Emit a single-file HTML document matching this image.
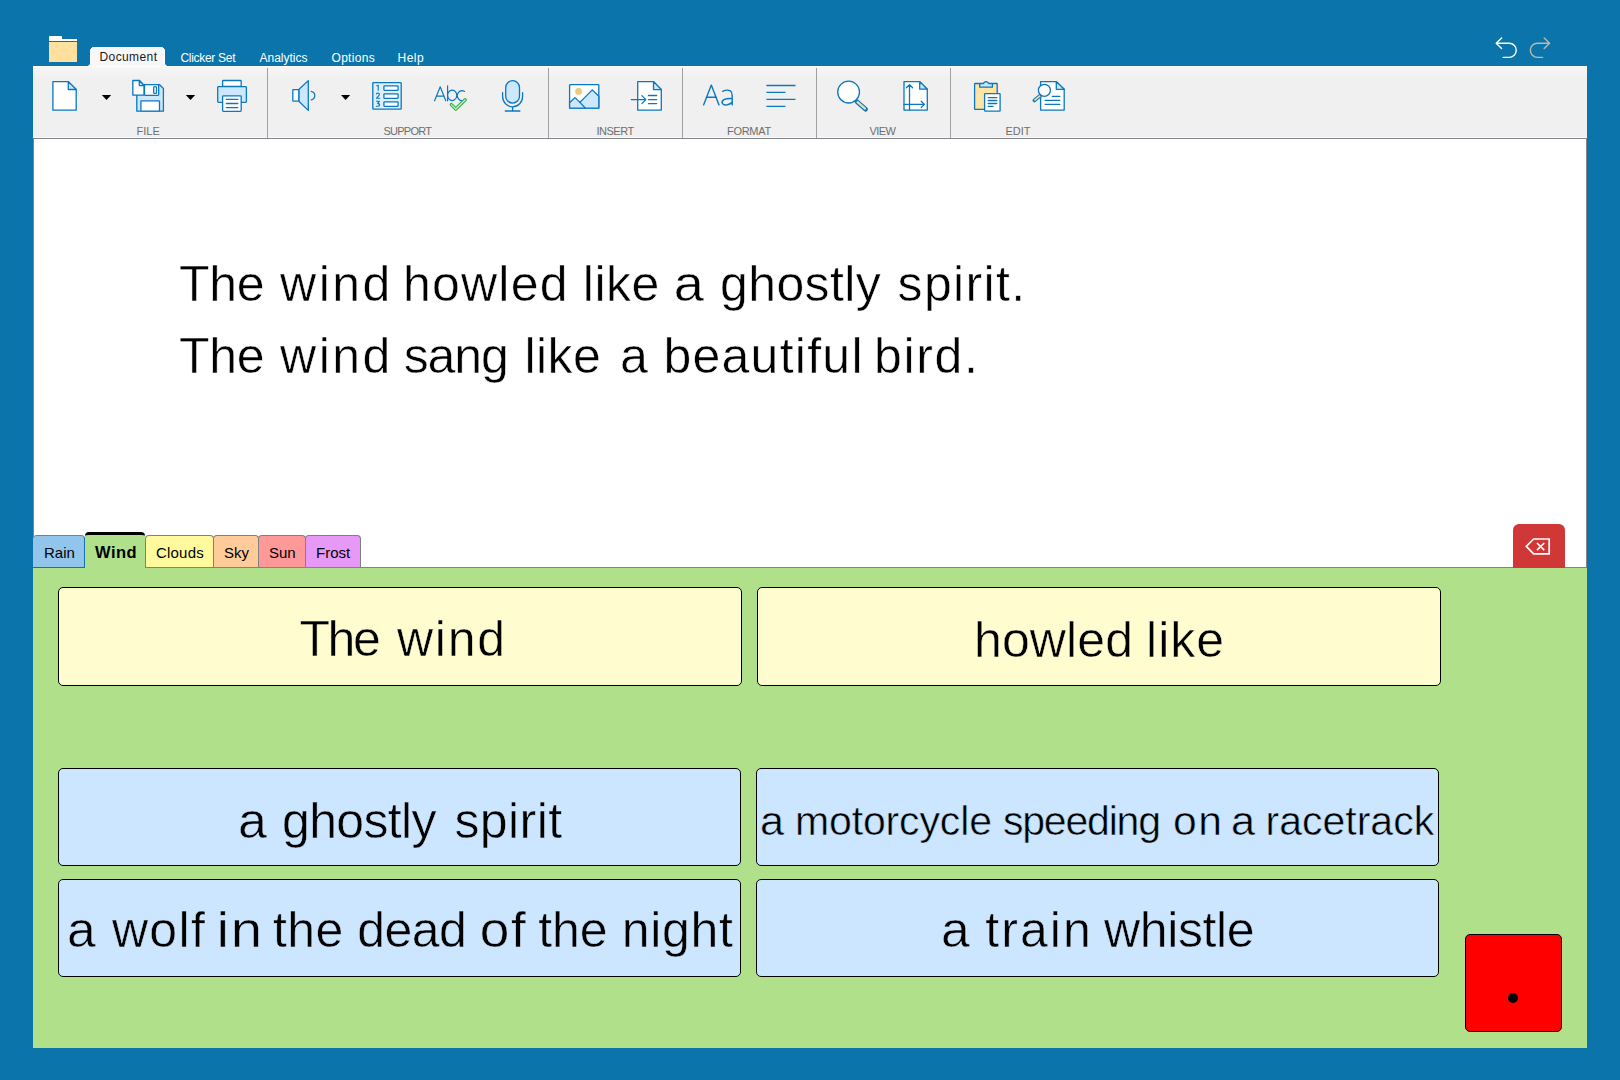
<!DOCTYPE html>
<html><head><meta charset="utf-8">
<style>
html,body{margin:0;padding:0;}
body{width:1620px;height:1080px;background:#0b74ab;position:relative;overflow:hidden;font-family:"Liberation Sans",sans-serif;}
.abs{position:absolute;}
#ribbon{left:33px;top:66px;width:1554px;height:72px;background:linear-gradient(#f6f6f6,#f0f0f0 12px);border-top:1px solid #fff;box-sizing:border-box;}
#ribline{left:33px;top:137px;width:1554px;height:1px;background:#fafafa;}
#ribline2{left:33px;top:138px;width:1554px;height:1px;background:#80848a;}
#doc{left:33px;top:139px;width:1554px;height:428px;background:#fff;border-left:1px solid #80848a;border-right:1px solid #80848a;box-sizing:border-box;}
#tabline{left:33px;top:567px;width:1554px;height:1px;background:#80848a;}
#green{left:33px;top:568px;width:1554px;height:480px;background:#b1e08a;}
.sep{width:1px;background:#a0a0a0;top:68px;height:70px;}
.mtab{font-size:12px;color:#fff;top:50px;white-space:nowrap;}
.lbl{font-size:11px;color:#6e6e6e;top:125px;white-space:nowrap;}
.cell{border:1px solid #000;border-radius:5px;box-sizing:border-box;}
.y{background:#fffdd0;}
.b{background:#cce6ff;}
.wd{position:absolute;font-size:50px;line-height:1;white-space:nowrap;color:#000;}
.sw{-webkit-text-stroke:0.5px #fff;}
.sy{-webkit-text-stroke:0.5px #fffdd0;}
.sb{-webkit-text-stroke:0.5px #cce6ff;}
.tab{top:535px;height:32px;border:1px solid #808080;border-bottom:none;border-radius:4px 4px 0 0;box-sizing:border-box;font-size:15px;color:#000;}
.tab span{position:absolute;top:8px;white-space:nowrap;}
</style></head><body>
<!-- halo -->

<!-- folder icon -->
<div class="abs" style="left:49px;top:36px;width:13px;height:4px;background:#fff;border-radius:1px 1px 0 0;"></div>
<div class="abs" style="left:49px;top:39px;width:28px;height:2px;background:#fff;"></div>
<div class="abs" style="left:49px;top:42px;width:28px;height:20px;background:#ffe09e;"></div>

<!-- menu tabs -->
<svg class="abs" style="left:80px;top:40px;" width="100" height="30" viewBox="80 40 100 30"><path d="M88,66.5 L90.5,64 V49.5 L92.5,47.5 H162.5 L164.5,49.5 V64 L167,66.5 Z" fill="#f7f7f7" stroke="#fff" stroke-width="1"/></svg>
<div class="abs mtab" style="left:99.5px;color:#1a1a1a;letter-spacing:0.4px;">Document</div>
<div class="abs mtab" style="left:180.5px;top:51px;letter-spacing:-0.3px;">Clicker Set</div>
<div class="abs mtab" style="left:259.5px;top:51px;">Analytics</div>
<div class="abs mtab" style="left:331.5px;top:51px;letter-spacing:0.3px;">Options</div>
<div class="abs mtab" style="left:397.5px;top:51px;letter-spacing:0.5px;">Help</div>

<div id="ribbon" class="abs"></div>
<div id="ribline" class="abs"></div>
<div id="ribline2" class="abs"></div>
<div class="abs sep" style="left:267px;"></div>
<div class="abs sep" style="left:548px;"></div>
<div class="abs sep" style="left:682px;"></div>
<div class="abs sep" style="left:816px;"></div>
<div class="abs sep" style="left:950px;"></div>

<div class="abs lbl" style="left:136.5px;">FILE</div>
<div class="abs lbl" style="left:383.5px;letter-spacing:-0.75px;">SUPPORT</div>
<div class="abs lbl" style="left:596.5px;letter-spacing:-0.5px;">INSERT</div>
<div class="abs lbl" style="left:727px;letter-spacing:-0.3px;">FORMAT</div>
<div class="abs lbl" style="left:869.5px;letter-spacing:-0.6px;">VIEW</div>
<div class="abs lbl" style="left:1005.5px;">EDIT</div>


<svg class="abs" style="left:0;top:0;" width="1620" height="140" viewBox="0 0 1620 140">
<g fill="none" stroke="#0a77c0" stroke-width="1.3" stroke-linejoin="round" stroke-linecap="round">
 <!-- new doc -->
 <path d="M52.9,81.6 H68.3 L76.2,89.5 V110.2 H52.9 Z" fill="#fff"/>
 <path d="M68.3,81.6 V89.5 H76.2 Z" fill="#cce8ff"/>
 <!-- save -->
 <path d="M136.8,84.7 H159.6 L163.4,88.5 V111.2 H136.8 Z" fill="#cce8ff"/>
 <rect x="144.5" y="84.7" width="14.2" height="10.6" rx="0.8" fill="#fff"/>
 <rect x="140.9" y="100.8" width="18.6" height="10.4" rx="0.6" fill="#fff"/>
 <rect x="153.7" y="86.6" width="2.8" height="6.8" rx="1" fill="#fff"/>
 <path d="M132.8,80.5 H139.3 L144,85.2 V95.1 H132.8 Z" fill="#fff"/>
 <path d="M139.3,80.5 V85.6 H144 Z" fill="#cce8ff"/>
 <!-- printer -->
 <rect x="222.6" y="80.5" width="18.6" height="6" rx="0.8" fill="#fff"/>
 <rect x="217.7" y="86.7" width="28.7" height="15.6" rx="0.8" fill="#cce8ff"/>
 <rect x="222.6" y="95.8" width="18.6" height="15.5" rx="0.8" fill="#fff"/>
 <path d="M226.3,99.4 H237.8 M226.3,103.5 H237.8 M226.3,107.6 H237.8"/>
 <!-- speaker -->
 <path d="M298.8,89.5 L308.3,80.6 V110.4 L298.8,101.2 Z" fill="#cce8ff"/>
 <rect x="292.8" y="89.6" width="6" height="11.6" rx="0.6" fill="#fff"/>
 <path d="M311.3,91.3 A4.4,4.4 0 0 1 311.3,99.9"/>
 <!-- numbered list -->
 <rect x="372.8" y="82.7" width="28.4" height="26.4" rx="0.6" fill="#dff0fd"/>
 <rect x="383.9" y="85.9" width="14.2" height="4.4" rx="0.5" fill="#fff"/>
 <rect x="383.9" y="93.9" width="14.2" height="4.4" rx="0.5" fill="#fff"/>
 <rect x="383.9" y="101.9" width="14.2" height="4.4" rx="0.5" fill="#fff"/>
 <path d="M376.8,85.8 L378.2,85.3 V90.3 M376.3,93.9 Q376.8,93 378,93 Q379.6,93.2 379.3,94.8 L376.4,98.3 H379.8 M376.4,101.3 H379.4 L377.6,103.4 Q379.8,103.6 379.7,105.2 Q379.3,106.7 376.3,106.2" stroke-width="1.1"/>
 <!-- abc -->
 <path d="M434.6,100.8 L440.2,86.8 L445.8,100.8 M436.6,96.2 H443.8" stroke-width="1.2"/>
 <path d="M447.6,85.8 V100.8 M447.6,95.3 A4.6,5.2 0 1 1 447.6,95.4" stroke-width="1.2"/>
 <path d="M464.6,91.4 A4.8,5 0 1 0 464.6,100" stroke-width="1.2"/>
 <path d="M451.3,104.6 L455.8,109 L465.2,99.8" stroke="#2fb04a" stroke-width="3.4"/>
 <path d="M451.3,104.6 L455.8,109 L465.2,99.8" stroke="#c6f2c6" stroke-width="1.2"/>
 <!-- mic -->
 <rect x="505.7" y="80.7" width="13.8" height="22.4" rx="6.9" fill="#cce8ff"/>
 <path d="M502.6,92.6 V96.6 A10,10.2 0 0 0 522.6,96.6 V92.6 M512.6,106.8 V111 M505.3,111 H519.9"/>
 <!-- image -->
 <rect x="569.6" y="84.6" width="29.2" height="23.6" rx="0.6" fill="#fff"/>
 <path d="M569.6,102.8 L574.9,97.6 L579.9,102.4 L592.3,89.9 L598.8,96.2 V108.2 H569.6 Z" fill="#cce8ff"/>
 <path d="M579.9,102.4 L585.2,108"/>
 <circle cx="578.6" cy="91.4" r="3.4" fill="#f0c878" stroke="none"/>
 <!-- insert file -->
 <path d="M637.7,81.6 H653.5 L661.3,89.4 V110.1 H637.7 Z" fill="#fff"/>
 <path d="M653.5,81.6 V89.6 H661.3 Z" fill="#cce8ff"/>
 <path d="M631.3,99.6 H645.7 M641.9,95.6 L645.8,99.6 L641.9,103.6 M648.5,95.5 H656.7 M648.5,99.6 H656.7 M648.5,103.6 H656.7"/>
 <!-- Aa -->
 <path d="M703.6,104.9 L711.3,85.1 L719,104.9 M706.3,97.3 H716.4" stroke-width="1.4"/>
 <path d="M722.6,91.3 Q727,89.3 730.3,90.8 Q732.2,92.2 732.2,95.5 V104.9 M732.2,98.6 Q727,98.2 724,99.6 Q721.4,101.2 722.3,103.4 Q723.6,105.4 727.4,104.8 Q730.6,104.2 732.2,102" stroke-width="1.4"/>
 <!-- align -->
 <path d="M766.4,85.5 H795.5 M766.4,92.4 H785.5 M766.4,99.4 H795.5 M766.4,106.4 H785.5" stroke-width="1.4" stroke-linecap="butt"/>
 <!-- magnifier -->
 <path d="M857,101.7 L865.6,109.2" stroke-width="4.6"/>
 <path d="M857,101.7 L865.6,109.2" stroke="#f8dc98" stroke-width="2.2" stroke-linecap="butt"/>
 <circle cx="848.6" cy="92.1" r="10.9" fill="#fff"/>
 <!-- page size -->
 <path d="M904,81.6 H919.7 L927.3,89.2 V110.1 H904 Z" fill="#fff"/>
 <path d="M919.7,81.6 V89.2 H927.3 Z" fill="#cce8ff"/>
 <path d="M909.5,110 V84.6 M906.4,87.8 L909.5,84.6 L912.6,87.8 M904,104.4 H924.4 M921.2,101.2 L924.4,104.4 L921.2,107.6"/>
 <!-- clipboard -->
 <rect x="974.6" y="83.5" width="22.6" height="25.8" rx="0.6" fill="#ffe4a4"/>
 <path d="M979.7,83.6 H983.2 Q986,79.8 988.8,83.6 H992.4 V87.2 H979.7 Z" fill="#cce8ff"/>
 <rect x="984.6" y="93.7" width="15.5" height="17.5" rx="0.6" fill="#fff"/>
 <path d="M988.2,97.6 H996.8 M988.2,100.5 H996.8 M988.2,103.5 H996.8 M988.2,106.4 H993"/>
 <!-- find doc -->
 <path d="M1040.6,81.6 H1056.3 L1064.2,89.3 V110.1 H1040.6 Z" fill="#fff"/>
 <path d="M1056.3,81.6 V89.3 H1064.2 Z" fill="#cce8ff"/>
 <path d="M1052.3,96.4 H1059.8 M1045.2,100.4 H1059.8 M1045.2,104.4 H1059.8"/>
 <path d="M1040.2,95.6 L1034.4,100.4" stroke-width="3.8"/>
 <path d="M1040.2,95.6 L1034.4,100.4" stroke="#f8dc98" stroke-width="1.6" stroke-linecap="butt"/>
 <circle cx="1044.4" cy="90.3" r="6" fill="#fff"/>
</g>
<g fill="#000">
 <path d="M101.8,94.9 H111.2 L106.5,100 Z"/>
 <path d="M185.8,94.9 H195.2 L190.5,100 Z"/>
 <path d="M341,95 H350.2 L345.6,100 Z"/>
</g>
<g fill="none" stroke-width="1.4" stroke-linejoin="round" stroke-linecap="round">
 <path d="M1501.6,38.1 L1496.2,43.3 L1501.6,48.6 M1496.2,43.3 H1509.2 A7.05,7.05 0 0 1 1509.2,57.4 H1503.2" stroke="#fff"/>
 <path d="M1544.2,38.1 L1549.6,43.3 L1544.2,48.6 M1549.6,43.3 H1537.4 A7.05,7.05 0 0 0 1537.4,57.4 H1542.6" stroke="#bcb8b2"/>
</g>
</svg>

<div id="doc" class="abs"></div>

<div id="green" class="abs"></div>
<div id="tabline" class="abs"></div>


<!-- category tabs -->
<div class="abs tab" style="left:33px;width:52px;background:#92c5ec;border-left:none;border-right:1px solid #1670b5;border-bottom:1px solid #1670b5;height:33px;"><span style="left:11px;">Rain</span></div>
<div class="abs tab" style="left:145px;width:69px;background:#fffa9e;"><span style="left:10px;letter-spacing:0.2px;">Clouds</span></div>
<div class="abs tab" style="left:213px;width:46px;background:#ffcc99;"><span style="left:10px;">Sky</span></div>
<div class="abs tab" style="left:258px;width:48px;background:#ff9999;"><span style="left:10px;">Sun</span></div>
<div class="abs tab" style="left:305px;width:56px;background:#e699f7;"><span style="left:10px;">Frost</span></div>
<div class="abs tab" style="left:85px;top:532px;width:60px;height:36px;background:#b1e08a;border:none;border-top:3px solid #000;border-radius:4px 4px 0 0;"><span style="left:10px;top:7.5px;font-weight:bold;font-size:16.5px;letter-spacing:0.5px;">Wind</span></div>

<!-- cells -->
<div class="abs cell y" style="left:58px;top:587px;width:684px;height:99px;"></div>
<div class="abs cell y" style="left:757px;top:587px;width:684px;height:99px;"></div>
<div class="abs cell b" style="left:58px;top:768px;width:683px;height:98px;"></div>
<div class="abs cell b" style="left:756px;top:768px;width:683px;height:98px;"></div>
<div class="abs cell b" style="left:58px;top:879px;width:683px;height:98px;"></div>
<div class="abs cell b" style="left:756px;top:879px;width:683px;height:98px;"></div>


<!-- cell & doc words -->
<div class="wd sw" style="left:179.1px;top:258.5px;letter-spacing:-0.40px;">The</div>
<div class="wd sw" style="left:280.0px;top:258.5px;letter-spacing:2.53px;">wind</div>
<div class="wd sw" style="left:403.0px;top:258.5px;letter-spacing:1.20px;">howled</div>
<div class="wd sw" style="left:582.8px;top:258.5px;letter-spacing:0.47px;">like</div>
<div class="wd sw" style="left:673.9px;top:258.5px;transform:scaleX(1.083);transform-origin:3.0px 0;">a</div>
<div class="wd sw" style="left:720.0px;top:258.5px;letter-spacing:0.40px;">ghostly</div>
<div class="wd sw" style="left:897.6px;top:258.5px;letter-spacing:1.33px;">spirit.</div>
<div class="wd sw" style="left:179.1px;top:331.2px;letter-spacing:-0.40px;">The</div>
<div class="wd sw" style="left:280.0px;top:331.2px;letter-spacing:2.53px;">wind</div>
<div class="wd sw" style="left:403.7px;top:331.2px;letter-spacing:-1.07px;">sang</div>
<div class="wd sw" style="left:524.4px;top:331.2px;letter-spacing:0.47px;">like</div>
<div class="wd sw" style="left:619.6px;top:331.2px;transform:scaleX(1.004);transform-origin:3.0px 0;">a</div>
<div class="wd sw" style="left:663.4px;top:331.2px;letter-spacing:1.26px;">beautiful</div>
<div class="wd sw" style="left:873.9px;top:331.2px;letter-spacing:1.68px;">bird.</div>
<div class="wd sy" style="left:299.4px;top:613.9px;letter-spacing:-2.40px;">The</div>
<div class="wd sy" style="left:397.0px;top:613.9px;letter-spacing:1.73px;">wind</div>
<div class="wd sy" style="left:974.1px;top:614.5px;letter-spacing:0.08px;">howled</div>
<div class="wd sy" style="left:1146.1px;top:614.5px;letter-spacing:1.00px;">like</div>
<div class="wd sb" style="left:237.9px;top:796.2px;transform:scaleX(1.038);transform-origin:3.0px 0;">a</div>
<div class="wd sb" style="left:282.1px;top:796.2px;letter-spacing:-0.67px;">ghostly</div>
<div class="wd sb" style="left:454.4px;top:796.2px;letter-spacing:0.42px;">spirit</div>
<div class="wd sb" style="left:759.9px;top:801.1px;transform:scaleX(1.055);transform-origin:2.0px 0;font-size:41.0px;">a</div>
<div class="wd sb" style="left:795.0px;top:801.1px;letter-spacing:-0.14px;font-size:41.0px;">motorcycle</div>
<div class="wd sb" style="left:1002.9px;top:801.1px;letter-spacing:-1.19px;font-size:41.0px;">speeding</div>
<div class="wd sb" style="left:1172.5px;top:801.1px;letter-spacing:1.50px;transform:scaleX(1.041);transform-origin:2.0px 0;font-size:41.0px;">on</div>
<div class="wd sb" style="left:1230.9px;top:801.1px;transform:scaleX(1.055);transform-origin:2.0px 0;font-size:41.0px;">a</div>
<div class="wd sb" style="left:1265.5px;top:801.1px;letter-spacing:0.01px;font-size:41.0px;">racetrack</div>
<div class="wd sb" style="left:66.7px;top:905.4px;transform:scaleX(1.033);transform-origin:3.0px 0;">a</div>
<div class="wd sb" style="left:111.9px;top:905.4px;letter-spacing:1.37px;">wolf</div>
<div class="wd sb" style="left:217.0px;top:905.4px;letter-spacing:1.50px;transform:scaleX(1.126);transform-origin:4.0px 0;">in</div>
<div class="wd sb" style="left:272.9px;top:905.4px;letter-spacing:0.45px;">the</div>
<div class="wd sb" style="left:357.3px;top:905.4px;letter-spacing:-0.57px;">dead</div>
<div class="wd sb" style="left:480.2px;top:905.4px;letter-spacing:1.50px;transform:scaleX(1.063);transform-origin:3.0px 0;">of</div>
<div class="wd sb" style="left:538.3px;top:905.4px;letter-spacing:-0.10px;">the</div>
<div class="wd sb" style="left:621.7px;top:905.4px;letter-spacing:0.72px;">night</div>
<div class="wd sb" style="left:941.0px;top:905.4px;transform:scaleX(1.033);transform-origin:3.0px 0;">a</div>
<div class="wd sb" style="left:985.2px;top:905.4px;letter-spacing:2.10px;">train</div>
<div class="wd sb" style="left:1104.0px;top:905.4px;letter-spacing:-0.37px;">whistle</div>

<!-- red button -->
<div class="abs" style="left:1465px;top:934px;width:97px;height:98px;background:#f00;border:1px solid #000;border-radius:5px;box-sizing:border-box;"></div>
<div class="abs" style="left:1508px;top:993px;width:10px;height:10px;background:#000;border-radius:50%;"></div>

<!-- delete button -->
<div class="abs" style="left:1513px;top:524px;width:52px;height:44px;background:#d03838;border-radius:6px 6px 0 0;"></div>
<svg class="abs" style="left:1500px;top:520px;" width="80" height="50" viewBox="1500 520 80 50"><g fill="none" stroke="#fff" stroke-width="1.7" stroke-linejoin="round"><path d="M1526.3,546.4 L1533.6,539 H1549.2 V553.9 H1533.6 Z"/><path d="M1537,543 L1544.2,550.2 M1544.2,543 L1537,550.2" stroke-linecap="butt"/></g></svg>
</body></html>
